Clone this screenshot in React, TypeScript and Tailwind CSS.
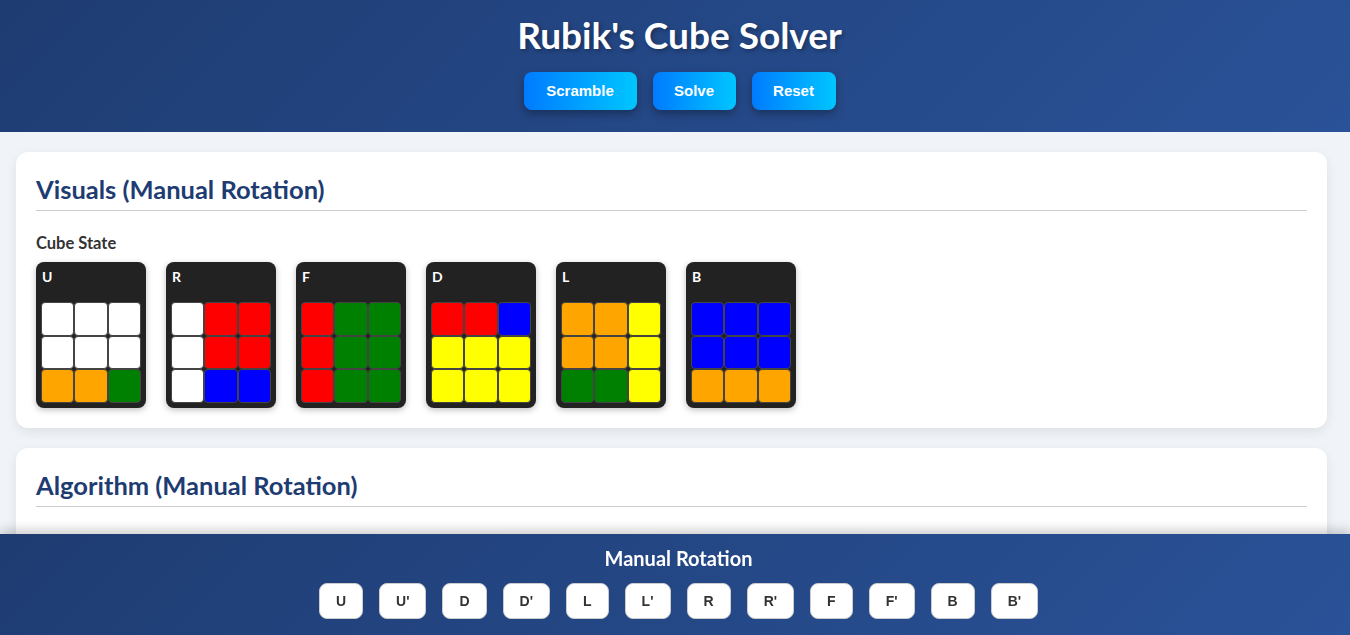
import React from "react";

const C: Record<string, string> = {
  W: "bg-[#ffffff]",
  O: "bg-[#ffa500]",
  G: "bg-[#008000]",
  R: "bg-[#ff0000]",
  B: "bg-[#0000ff]",
  Y: "bg-[#ffff00]",
};

const faces: { name: string; s: string }[] = [
  { name: "U", s: "WWWWWWOOG" },
  { name: "R", s: "WRRWRRWBB" },
  { name: "F", s: "RGGRGGRGG" },
  { name: "D", s: "RRBYYYYYY" },
  { name: "L", s: "OOYOOYGGY" },
  { name: "B", s: "BBBBBBOOO" },
];

const moves = ["U", "U'", "D", "D'", "L", "L'", "R", "R'", "F", "F'", "B", "B'"];

function Face({ name, s }: { name: string; s: string }) {
  return (
    <div className="w-[110px] h-[146px] bg-[#222222] rounded-lg p-[5px] shadow-[0_2px_6px_rgba(0,0,0,0.25)]">
      <div className="h-[20px] leading-[20px] text-[14px] font-bold text-white pl-[1px]">{name}</div>
      <div className="mt-[15px] grid grid-cols-3 w-[100px]">
        {s.split("").map((c, i) => (
          <div key={i} className={`h-[33.5px] border border-[#444444] rounded-[4px] ${C[c]}`} />
        ))}
      </div>
    </div>
  );
}

export default function App() {
  return (
    <div className="min-h-screen bg-[#f0f4f8] font-['Lato','Noto_Sans',sans-serif]">
      <header className="bg-[linear-gradient(135deg,#1e3c72,#2a5298)] pt-[13px] pb-[22px] pl-[9px] text-center">
        <h1 className="text-[37px] leading-[44px] font-bold text-white [text-shadow:2px_2px_4px_rgba(0,0,0,0.3)]">
          Rubik's Cube Solver
        </h1>
        <div className="mt-[15px] flex justify-center gap-4 font-['Liberation_Sans',Arial,sans-serif]">
          {[
            ["Scramble", "w-[113px]"],
            ["Solve", "w-[83px]"],
            ["Reset", "w-[84px]"],
          ].map(([t, w]) => (
            <button
              key={t}
              className={`${w} h-[38px] rounded-lg bg-[linear-gradient(90deg,#007bff,#00c6ff)] text-white font-bold text-[15px] shadow-[0_4px_8px_rgba(0,0,0,0.3)]`}
            >
              {t}
            </button>
          ))}
        </div>
      </header>

      <main className="pl-4 pr-[23px] pt-5 pb-[140px] flex flex-col gap-5">
        <section className="bg-white rounded-xl p-5 shadow-[0_4px_12px_rgba(0,0,0,0.08)]">
          <h2 className="text-[25.5px] leading-[34px] font-bold text-[#1e3c72] pb-[4px] border-b border-[#cccccc]">
            Visuals (Manual Rotation)
          </h2>
          <h3 className="mt-[22px] text-[16.5px] leading-[20px] font-bold text-[#333333]">Cube State</h3>
          <div className="mt-[9px] flex gap-5">
            {faces.map((f) => (
              <Face key={f.name} {...f} />
            ))}
          </div>
        </section>

        <section className="bg-white rounded-xl p-5 shadow-[0_4px_12px_rgba(0,0,0,0.08)] min-h-[200px]">
          <h2 className="text-[25.5px] leading-[34px] font-bold text-[#1e3c72] pb-[4px] border-b border-[#cccccc]">
            Algorithm (Manual Rotation)
          </h2>
        </section>
      </main>

      <footer className="fixed bottom-0 left-0 right-0 h-[101px] bg-[linear-gradient(135deg,#1e3c72,#2a5298)] shadow-[0_-4px_10px_rgba(0,0,0,0.2)] pt-[12px] pl-[7px] text-center">
        <div className="text-[20px] leading-[24px] font-bold text-white">Manual Rotation</div>
        <div className="mt-[13px] flex justify-center gap-4 font-['Liberation_Sans',Arial,sans-serif]">
          {moves.map((m) => (
            <button
              key={m}
              className="h-[36px] px-4 bg-white border border-[#cccccc] rounded-lg text-[14px] font-bold text-[#333333]"
            >
              {m}
            </button>
          ))}
        </div>
      </footer>
    </div>
  );
}
